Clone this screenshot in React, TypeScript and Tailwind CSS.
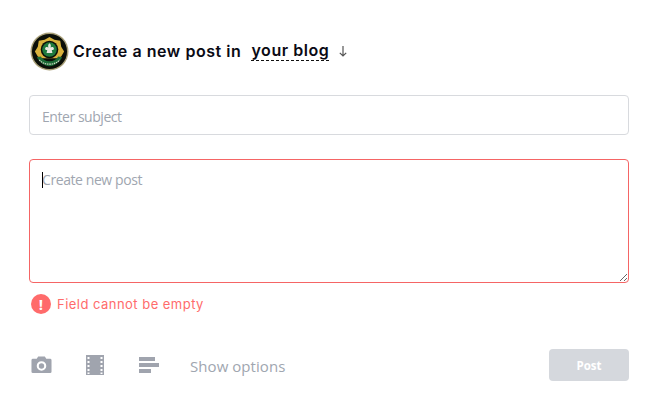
export default function App() {
    return (
        <div className="h-[412px] w-[658px] overflow-hidden bg-white px-[29px] pt-[31px] font-['Open_Sans',sans-serif]">
            <div className="flex h-10 items-center">
                <svg width="39" height="39" viewBox="0 0 40 40" className="mr-1 ml-px shrink-0">
                    <circle cx="20" cy="20" r="19.500" fill="#a89f78" />
                    <circle cx="20" cy="20" r="18" fill="#0b0f08" />
                    <polygon points="20,5 25,8 31,9 32,15 35,20 32,25 28,27 12,27 8,25 5,20 8,15 9,9 15,8" fill="#d9b23c" />
                    <circle cx="20" cy="18" r="9" fill="#0b0f08" />
                    <circle cx="20" cy="18" r="7.500" fill="#1f7a3d" />
                    <path d="M20 11.500c1.700 1.500 1.700 3 1 4.500 1-1 3.500-.8 3.500 1 0 1.200-1 1.800-2.200 1.500l.7 3h-6l.7-3c-1.200.3-2.200-.3-2.200-1.500 0-1.800 2.500-2 3.500-1-.7-1.500-.7-3 1-4.500z" fill="#e8e8e0" />
                    <path d="M7 26c3 6 8 9 13 9s10-3 13-9l-4-1c-2 3-5 5-9 5s-7-2-9-5z" fill="#1c6b36" />
                    <path d="M9.500 28.500c2.500 3 6 4.500 10.500 4.500s8-1.500 10.500-4.500" fill="none" stroke="#d8d8c8" strokeWidth="1.200" strokeDasharray="1.500 .8" />
                </svg>
                <h1 className="font-['Inter',sans-serif] text-[16px] font-semibold tracking-[0.55px] text-[#0a0a14]">
                    Create a new post in
                </h1>
                <span className="ml-[10px] border-b border-dashed border-[#111] font-['Inter',sans-serif] text-[16px] leading-[19px] font-semibold tracking-[0.55px] text-[#0a0a14]">
                    your blog
                </span>
                <svg width="10" height="12" viewBox="0 0 10 12" className="ml-[9px] text-[#555]" fill="none" stroke="currentColor" strokeWidth="1.200">
                    <path d="M5 1v10M1.800 7.800 5 11l3.200-3.200" />
                </svg>
            </div>

            <input
                placeholder="Enter subject"
                className="mt-6 block h-10 w-[600px] rounded border border-[#d8dade] bg-white px-3 pt-0.5 text-sm tracking-[-0.45px] text-gray-700 outline-none placeholder:text-[#a0a6b0]"
            />

            <div className="relative mt-6 h-[124px] w-[600px]">
                <textarea
                    placeholder="Create new post"
                    className="block h-[124px] w-[600px] resize-y rounded border border-[#f56565] bg-white px-3 py-2.5 text-sm tracking-[-0.42px] text-gray-700 outline-none placeholder:text-[#a0a6b0]"
                />
                <span className="absolute top-[13px] left-[13px] h-4 w-px bg-black" />
            </div>

            <div className="mt-[10px] flex h-[22px] items-center">
                <span className="ml-0.5 flex h-5 w-5 items-center justify-center rounded-full bg-[#ff6b6b] text-[15px] leading-none font-bold text-white">
                    !
                </span>
                <span className="mt-0.5 ml-1.5 font-['Inter',sans-serif] text-[13px] tracking-[0.47px] text-[#ff6b6b]">
                    Field cannot be empty
                </span>
            </div>

            <div className="mt-[34px] flex h-8 items-center">
                <svg width="21" height="20" viewBox="0 0 22 20" className="ml-0.5 text-[#a0a4ae]">
                    <path fill="currentColor" fillRule="evenodd" d="M7.500 1h7l1.500 2.500h4A1.500 1.500 0 0 1 21.500 5v12a1.500 1.500 0 0 1-1.500 1.500H2A1.500 1.500 0 0 1 .5 17V5A1.500 1.500 0 0 1 2 3.500h4zM11 6a5 5 0 1 0 0 10 5 5 0 0 0 0-10zm0 2.200a2.800 2.800 0 1 1 0 5.600 2.800 2.800 0 0 1 0-5.600z" />
                </svg>
                <svg width="18" height="20" viewBox="0 0 18 20" className="ml-[34px] text-[#a0a4ae]">
                    <path fill="currentColor" fillRule="evenodd" d="M0 0h18v20H0zM1.500 2v2h2V2zm0 4v2h2V6zm0 4v2h2v-2zm0 4v2h2v-2zm0 3.500v1.500h2v-1.500zM14.500 2v2h2V2zm0 4v2h2V6zm0 4v2h2v-2zm0 4v2h2v-2zm0 3.500v1.500h2v-1.500z" />
                </svg>
                <svg width="20" height="16" viewBox="0 0 20 16" className="ml-[35px] text-[#a0a4ae]">
                    <path fill="currentColor" d="M0 0h16v4H0zM0 6h20v4H0zM0 12h12v4H0z" />
                </svg>
                <span className="mt-0.5 ml-[31px] text-[15px] tracking-[0.06px] text-[#a0a6b0]">Show options</span>
                <button
                    type="button"
                    className="ml-auto h-8 w-20 rounded bg-[#d5d8dd] pt-px text-[11.500px] font-bold text-white"
                >
                    Post
                </button>
            </div>
        </div>
    );
}
